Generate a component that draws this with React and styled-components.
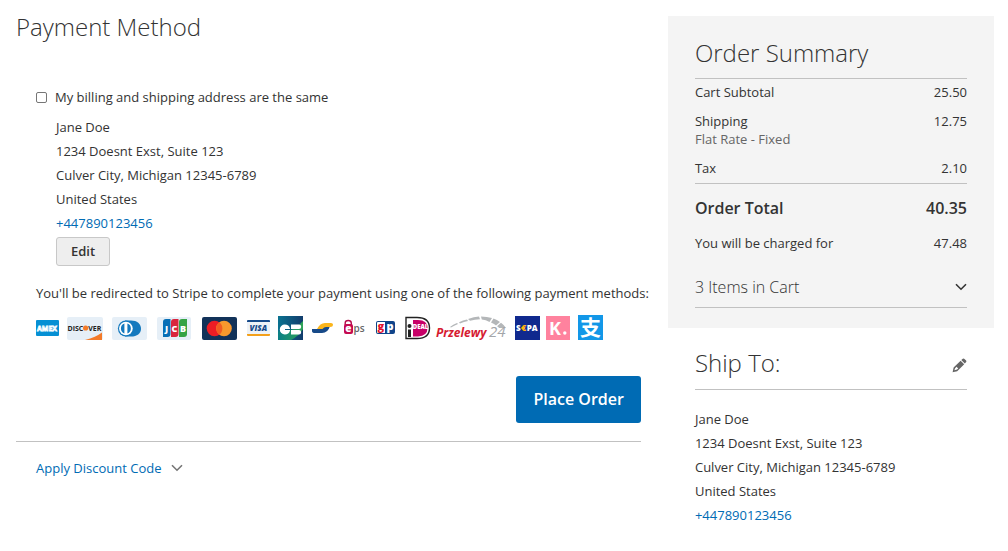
import React from 'react'
import styled, { createGlobalStyle } from 'styled-components'

const GlobalStyle = createGlobalStyle`
    * {
        box-sizing: border-box;
    }
    body {
        margin: 0;
        background-color: white;
        color: #333;
        font-family: "Open Sans", "Noto Sans", sans-serif;
        font-size: 13px;
        line-height: 18px;
    }
`;

const Container = styled.div`
    display: grid;
    grid-template-columns: minmax(0, 23fr) minmax(0, 12fr);
    column-gap: 27px;
    align-items: start;
    padding: 0 14px 0 16px;
`;

const Main = styled.main`
    padding-top: 10px;
`;

const Title = styled.h2`
    margin: 0;
    font-size: 24px;
    font-weight: 300;
    line-height: 34px;
`;

const Billing = styled.section`
    padding: 44px 0 18px 20px;
    border-bottom: 1px solid #c1c1c1;
`;

const CheckRow = styled.div`
    display: flex;
    align-items: center;
    gap: 8px;
`;

const Checkbox = styled.input`
    appearance: none;
    width: 11px;
    height: 11px;
    margin: 0;
    border: 1px solid #767676;
    border-radius: 2px;
    background-color: white;

    &:checked {
        background-color: #006bb4;
    }
`;

const Address = styled.address`
    font-style: normal;
    line-height: 24px;
`;

const BillingDetails = styled.div`
    padding: 9px 0 0 20px;
`;

const Link = styled.a`
    color: #006bb4;
    text-decoration: none;
`;

const EditButton = styled.button`
    display: block;
    margin-top: 2px;
    padding: 4px 14px 5px;
    border: 1px solid #c8c8c8;
    border-radius: 3px;
    background-color: #eee;
    color: #333;
    font: 600 13px/18px "Open Sans", sans-serif;
    cursor: pointer;
`;

const Note = styled.p`
    margin: 18px 0 13px;

    @media (min-width: 960px) {
        white-space: nowrap;
    }
`;

const Logos = styled.div`
    display: flex;
    flex-wrap: wrap;

    svg {
        display: block;
        overflow: visible;
    }
`;

const Actions = styled.div`
    display: flex;
    justify-content: flex-end;
    margin-top: 35px;
`;

const PlaceOrder = styled.button`
    padding: 12px 17px 13px;
    border: 0;
    border-radius: 3px;
    background-color: #006bb4;
    color: white;
    font: 600 16px/22px "Open Sans", sans-serif;
    cursor: pointer;
`;

const DiscountButton = styled.button`
    display: flex;
    align-items: center;
    gap: 10px;
    margin: 17px 0 0 20px;
    padding: 0;
    border: 0;
    background: none;
    color: #006bb4;
    font: 400 13px/18px "Open Sans", sans-serif;
    cursor: pointer;
`;

const Sidebar = styled.aside`
    padding-top: 16px;
`;

const Summary = styled.section`
    padding: 20px 27px;
    background-color: #f4f4f4;
`;

const SummaryTitle = styled(Title)`
    padding-bottom: 8px;
    border-bottom: 1px solid #c1c1c1;
`;

const Totals = styled.table`
    width: 100%;
    border-collapse: collapse;
`;

const Row = styled.tr`
    border-bottom: ${props => props.$line ? '1px solid #c1c1c1' : '0'};

    th, td {
        padding: 4px 0 ${props => props.$line ? '6px' : '7px'};
        font-weight: 400;
        text-align: left;
        vertical-align: top;
    }
    td {
        text-align: right;
    }
`;

const TotalRow = styled(Row)`
    th, td {
        padding: 12px 0 10px;
        font-size: 16px;
        font-weight: 600;
        line-height: 24px;
    }
`;

const Small = styled.span`
    display: block;
    color: #666;
`;

const CartButton = styled.button`
    display: flex;
    align-items: center;
    justify-content: space-between;
    width: 100%;
    margin-top: 16px;
    padding: 0 0 8px;
    border: 0;
    border-bottom: 1px solid #c1c1c1;
    background: none;
    color: #333;
    font: 300 16px/24px "Open Sans", sans-serif;
    cursor: pointer;
`;

const ShipTo = styled.section`
    padding: 18px 27px;
`;

const ShipHeader = styled.div`
    display: flex;
    align-items: center;
    justify-content: space-between;
    margin-bottom: 17px;
    padding-bottom: 9px;
    border-bottom: 1px solid #c1c1c1;
`;

const IconButton = styled.button`
    display: flex;
    padding: 4px 0 0;
    border: 0;
    background: none;
    cursor: pointer;
`;

const LogoText = styled.text`
    font-family: "Open Sans", "Noto Sans CJK SC", sans-serif;
    font-weight: ${props => props.$weight || 800};
    font-style: ${props => props.$italic ? 'italic' : 'normal'};
`;

const Chevron = ({ color }) => (
    <svg width="12" height="8" viewBox="0 0 12 8" fill="none" stroke={color} strokeWidth="1.6" aria-hidden="true">
        <path d="M1 1.2 L6 6.2 L11 1.2" />
    </svg>
)

const Pencil = () => (
    <svg width="15" height="15" viewBox="0 0 15 15" aria-hidden="true">
        <path fill="#666" fillRule="evenodd" d="M0.6 14.2 L1.6 9.6 L8.6 2.8 L12.2 6.2 L5.2 13.2 Z M2.4 12.3 L5 11.6 L6.2 10.4 L4.5 8.8 L3.1 10.2 Z" />
        <path fill="#666" d="M9.3 2.1 L10.8 0.7 Q11.7 0.1 12.5 0.9 L14.1 2.4 Q14.8 3.2 14.1 4 L12.8 5.4 Z" />
    </svg>
)

const Logo = ({ name, width, children }) => (
    <svg width={width} height="26" viewBox={`0 0 ${width} 26`} role="img" aria-label={name}>
        {children}
    </svg>
)

const PaymentLogos = () => (
    <Logos>
        <Logo name="American Express" width={27}>
            <rect y="5" width="23" height="16" rx="1" fill="#0690d4" />
            <LogoText x="1" y="15.7" fontSize="7" $weight={700} fill="#0690d4" stroke="white" strokeWidth="0.8">AMEX</LogoText>
        </Logo>
        <Logo name="Discover" width={44}>
            <rect x="4" y="2" width="36" height="23" rx="2" fill="#e6eff7" />
            <path d="M22 25 Q33 22 39 17.5 V25 Z" fill="#f47b2a" />
            <LogoText x="4.5" y="15.5" fontSize="7" $weight={700} fill="#222">DISC</LogoText>
            <circle cx="22.6" cy="13" r="2.6" fill="#f47b2a" />
            <LogoText x="25.2" y="15.5" fontSize="7" $weight={700} fill="#222">VER</LogoText>
        </Logo>
        <Logo name="Diners Club" width={45}>
            <rect x="5" y="2" width="35" height="23" rx="2" fill="#e6eff7" />
            <path d="M18 5.5 H24 C30 5.5 34 9 34 13.7 S30 21.5 24 21.5 H18 Z" fill="#1479be" />
            <circle cx="18.9" cy="13.5" r="8" fill="#1479be" />
            <circle cx="18.9" cy="13.5" r="6.8" fill="white" />
            <path d="M17.4 8.6 A5.2 5.2 0 0 0 17.4 18.4 Z M20.4 8.6 A5.2 5.2 0 0 1 20.4 18.4 Z" fill="#1479be" />
        </Logo>
        <Logo name="JCB" width={45}>
            <rect x="5" y="2" width="34" height="23" rx="2" fill="#e6eff7" />
            <path d="M14 4 H18.5 V19 Q18.5 22 15.5 22 H11 V7 Q11 4 14 4" fill="#086fb6" />
            <path d="M22 4 H26.5 V19 Q26.5 22 23.5 22 H19 V7 Q19 4 22 4" fill="#d9253c" />
            <path d="M30 4 H35 V19 Q35 22 32 22 H27 V7 Q27 4 30 4" fill="#35a344" />
            <LogoText x="13" y="16.5" fontSize="9" fill="white">J</LogoText>
            <LogoText x="19.6" y="16.5" fontSize="9" fill="white">C</LogoText>
            <LogoText x="28" y="16.5" fontSize="9" fill="white">B</LogoText>
        </Logo>
        <Logo name="Mastercard" width={45}>
            <rect x="5" y="2" width="35" height="23" rx="2" fill="#123259" />
            <circle cx="17.5" cy="13.5" r="7.8" fill="#eb1d25" />
            <circle cx="27" cy="13.5" r="7.8" fill="#f8992d" />
            <path d="M22.3 7.3 A7.8 7.8 0 0 1 22.3 19.7 A7.8 7.8 0 0 1 22.3 7.3" fill="#f15c22" />
        </Logo>
        <Logo name="Visa" width={33}>
            <rect x="5" y="5" width="23" height="16" rx="1" fill="#eef2f7" />
            <path d="M5 7 V6 Q5 5 6 5 H27 Q28 5 28 6 V7 Z" fill="#174b8b" />
            <path d="M5 19 H28 V20 Q28 21 27 21 H6 Q5 21 5 20 Z" fill="#f3a01b" />
            <LogoText x="7.5" y="16" fontSize="8" $italic fill="#174b8b">VISA</LogoText>
        </Logo>
        <Logo name="Cartes Bancaires" width={33}>
            <defs>
                <linearGradient id="cb" x1="0" y1="0" x2="1" y2="0">
                    <stop offset="0" stopColor="#0a7290" />
                    <stop offset="1" stopColor="#123c6c" />
                </linearGradient>
                <linearGradient id="cb-green" x1="0" y1="0" x2="1" y2="0">
                    <stop offset="0" stopColor="#0b7f86" />
                    <stop offset="1" stopColor="#2fa556" />
                </linearGradient>
            </defs>
            <rect x="3" y="1" width="25" height="24" fill="url(#cb)" />
            <path d="M3 16 Q18 18 28 6 V14 Q24 21 16 25 H3 Z" fill="url(#cb-green)" />
            <path d="M15 14 V13.5 C14.5 11 12.5 9.5 9.8 9.5 A5 5 0 0 0 9.8 19.5 C12.5 19.5 14.5 18 15 15.5 V15 H10 V14 Z" fill="white" />
            <path d="M16 9.5 H24 Q26.2 9.5 26.2 11.7 Q26.2 14 24 14 H16 Z M16 15 H24 Q26.2 15 26.2 17.2 Q26.2 19.5 24 19.5 H16 Z" fill="white" />
        </Logo>
        <Logo name="Bancontact" width={30}>
            <path d="M4 14 H11 Q14 14 16 11 H22 Q20 18 14 18 H7 Q4 18 4 16 Z" fill="#174a88" />
            <path d="M9 14 Q12 8 17 8 H23 Q25 8 25 9.5 Q25 12 22 12 H18 Q16 12 14.5 14 Z" fill="#fbb51b" />
        </Logo>
        <Logo name="EPS" width={33}>
            <path d="M6.5 10 V8 Q6.5 4.8 10.2 4.8 T14 8 V10 H12.6 V8 Q12.6 6.2 10.2 6.2 T7.9 8 V10 Z" fill="#b50b4b" />
            <rect x="6" y="9" width="9" height="10" rx="2" fill="#c50b50" />
            <LogoText x="7.3" y="17" fontSize="10" fill="white">e</LogoText>
            <LogoText x="15.5" y="17" fontSize="10" $weight={600} fill="#666">ps</LogoText>
        </Logo>
        <Logo name="Giropay" width={29}>
            <rect x="5" y="6" width="19" height="13" rx="2" fill="#10448a" />
            <path d="M7 7 H14 V18 H7 Q6 18 6 17 V8 Q6 7 7 7" fill="white" />
            <LogoText x="6.6" y="15" fontSize="11" fill="#e3122f">g</LogoText>
            <LogoText x="15.4" y="15" fontSize="11" fill="white">p</LogoText>
        </Logo>
        <Logo name="iDEAL" width={33}>
            <path d="M6 2.5 H17 Q29.5 2.5 29.5 13 T17 23.5 H6 Z" fill="white" stroke="#222" strokeWidth="1.4" />
            <path d="M13 5 H18 Q27.5 5 27.5 13 T18 21.5 H13 Z" fill="#c70067" />
            <circle cx="9.5" cy="11" r="2" fill="#222" />
            <path d="M8 14.5 H11 V22 H8 Z" fill="#222" />
            <LogoText x="12.8" y="13.5" fontSize="6" fill="white">DEAL</LogoText>
        </Logo>
        <Logo name="Przelewy24" width={79}>
            <g fill="#b4b7b9">
                <path d="M17 12 Q20 9.5 24 8 L25 9 Q21 10.5 18 12.5 Z" />
                <path d="M26 7.2 Q30 5.5 34 4.6 L35 6 Q31 7 27 8.4 Z" />
                <path d="M35 4 Q41 2 46 1.6 L47 4.2 Q42 4.4 37 5.8 Z" />
                <path d="M48 1.5 Q54 1.5 59 3 L56.5 7 Q53 5 48.8 4.6 Z" />
                <path d="M60.5 3.4 Q64 4.8 67 7 L63 10.6 Q61.5 8.6 58 7.4 Z" />
                <path d="M68 7.8 Q71 10 73 13 H66 Q65.5 12 64 11.2 Z" />
            </g>
            <LogoText x="3" y="21.5" fontSize="12" $weight={700} $italic fill="#d61b32">Przelewy</LogoText>
            <LogoText x="56" y="21.5" fontSize="15" $weight={400} $italic fill="#a3a6a9">24</LogoText>
        </Logo>
        <Logo name="SEPA" width={31}>
            <rect x="3" y="1" width="25" height="24" fill="#10298e" />
            <LogoText x="4" y="16" fontSize="8" fill="white">S</LogoText>
            <LogoText x="9" y="16" fontSize="9" fill="#ffb50a">€</LogoText>
            <LogoText x="14.8" y="16" fontSize="8" fill="white">PA</LogoText>
        </Logo>
        <Logo name="Klarna" width={31}>
            <rect x="3" y="1" width="24" height="24" fill="#ff829e" />
            <LogoText x="6" y="19.5" fontSize="18" $weight={700} fill="white">K</LogoText>
            <circle cx="21.8" cy="18" r="1.7" fill="white" />
        </Logo>
        <Logo name="Alipay" width={30}>
            <rect x="4" y="0" width="25" height="25" fill="#1297e8" />
            <LogoText x="6" y="20" fontSize="21" $weight={700} fill="white">支</LogoText>
        </Logo>
    </Logos>
)

const CustomerAddress = () => (
    <Address>
        Jane Doe<br />
        1234 Doesnt Exst, Suite 123<br />
        Culver City, Michigan 12345-6789<br />
        United States<br />
        <Link href="tel:+447890123456">+447890123456</Link>
    </Address>
)

const App = () => {
    return (
        <Container>
            <GlobalStyle />
            <Main>
                <Title>Payment Method</Title>
                <Billing>
                    <CheckRow>
                        <Checkbox type="checkbox" id="same-address" />
                        <label htmlFor="same-address">My billing and shipping address are the same</label>
                    </CheckRow>
                    <BillingDetails>
                        <CustomerAddress />
                        <EditButton type="button">Edit</EditButton>
                    </BillingDetails>
                    <Note>You'll be redirected to Stripe to complete your payment using one of the following payment methods:</Note>
                    <PaymentLogos />
                    <Actions>
                        <PlaceOrder type="submit">Place Order</PlaceOrder>
                    </Actions>
                </Billing>
                <DiscountButton type="button">
                    Apply Discount Code
                    <Chevron color="#757575" />
                </DiscountButton>
            </Main>
            <Sidebar>
                <Summary>
                    <SummaryTitle>Order Summary</SummaryTitle>
                    <Totals>
                        <tbody>
                            <Row>
                                <th scope="row">Cart Subtotal</th>
                                <td>25.50</td>
                            </Row>
                            <Row>
                                <th scope="row">Shipping<Small>Flat Rate - Fixed</Small></th>
                                <td>12.75</td>
                            </Row>
                            <Row $line>
                                <th scope="row">Tax</th>
                                <td>2.10</td>
                            </Row>
                            <TotalRow>
                                <th scope="row">Order Total</th>
                                <td>40.35</td>
                            </TotalRow>
                            <Row>
                                <th scope="row">You will be charged for</th>
                                <td>47.48</td>
                            </Row>
                        </tbody>
                    </Totals>
                    <CartButton type="button">
                        3 Items in Cart
                        <Chevron color="#333" />
                    </CartButton>
                </Summary>
                <ShipTo>
                    <ShipHeader>
                        <Title>Ship To:</Title>
                        <IconButton type="button" aria-label="Edit shipping address">
                            <Pencil />
                        </IconButton>
                    </ShipHeader>
                    <CustomerAddress />
                </ShipTo>
            </Sidebar>
        </Container>
    )
}

export default App
